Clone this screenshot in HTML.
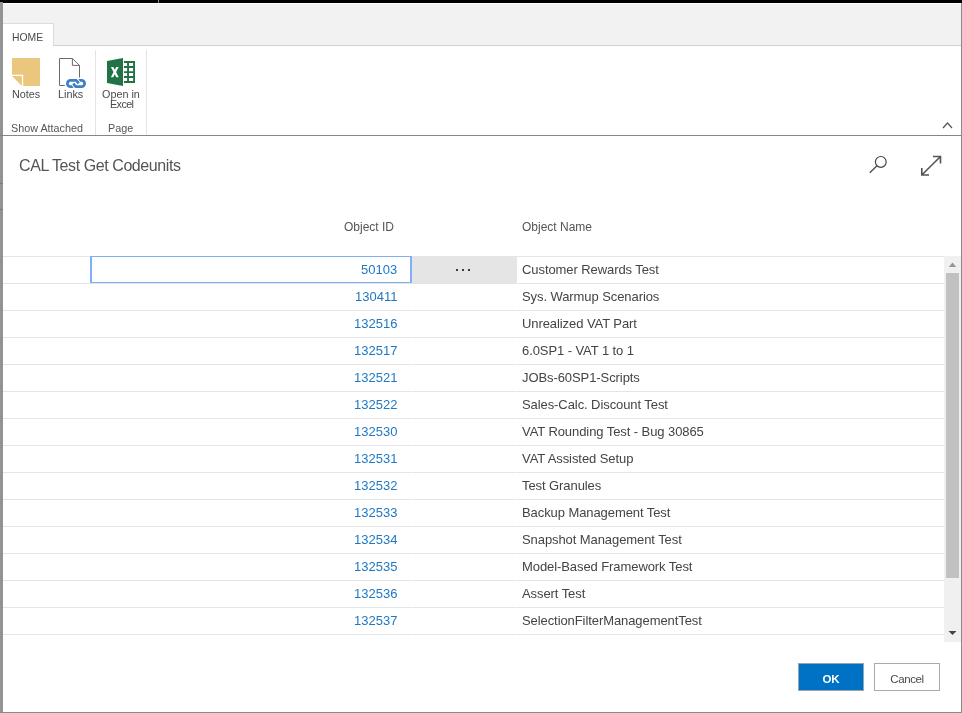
<!DOCTYPE html>
<html><head><meta charset="utf-8">
<style>
*{margin:0;padding:0;box-sizing:border-box}
html,body{width:962px;height:713px;overflow:hidden;background:#fff;font-family:"Liberation Sans",sans-serif;position:relative}
.a{position:absolute}
.t{position:absolute;white-space:nowrap;line-height:1;will-change:transform}
.rb{font-size:10.8px;color:#4a4a4a}
.id{right:565px;font-size:13px;color:#1f78c3;text-align:right}
.nm{left:522px;font-size:13px;color:#444;letter-spacing:-0.08px}
</style></head><body>
<!-- top black bar -->
<div class="a" style="left:0;top:0;width:962px;height:3px;background:#000"></div>
<div class="a" style="left:158px;top:0;width:1px;height:3px;background:#888"></div>
<!-- ribbon tab strip -->
<div class="a" style="left:3px;top:4px;width:958px;height:41px;background:#f2f2f2"></div>
<div class="a" style="left:3px;top:45px;width:958px;height:1px;background:#c9d1da"></div>
<!-- HOME tab -->
<div class="a" style="left:3px;top:23px;width:51px;height:23px;background:#fff;border-top:1px solid #dcdcdc;border-right:1px solid #dcdcdc"></div>
<div class="t" style="left:12px;top:33px;font-size:10.4px;color:#4a4a4a">HOME</div>
<!-- ribbon body bottom line -->
<div class="a" style="left:3px;top:135px;width:958px;height:1px;background:#7f8790"></div>
<!-- separators -->
<div class="a" style="left:95px;top:50px;width:1px;height:85px;background:#e3e3e3"></div>
<div class="a" style="left:146px;top:50px;width:1px;height:85px;background:#e3e3e3"></div>
<!-- ribbon icons -->
<svg class="a" style="left:0;top:0" width="160" height="100" viewBox="0 0 160 100">
  <polygon points="12,58 40,58 40,86 23.2,86 23.2,74.7 12,74.7" fill="#ebc77d"/>
  <polygon points="12,76 21.9,76 21.9,86" fill="#ebc77d"/>
  <path d="M64.8,85.5 H59.5 V58.5 H72.4 L79.5,65.4 V77.5 M72.4,58.5 V65.4 H79.5" fill="none" stroke="#6b6b6b" stroke-width="1"/>
  <path d="M73.5,86.6 H70.5 A3.1,3.1 0 0 1 70.5,80.4 H76.3 L78.7,83.4 M78.6,80.4 H81.5 A3.1,3.1 0 0 1 81.5,86.6 H75.6 L73.3,83.5" fill="none" stroke="#3f7fc4" stroke-width="2.8"/>
  <path d="M77.2,78.6 L80.4,82.6 M71.5,84.2 L74.5,88.3" stroke="#fff" stroke-width="0.9"/>
  <polygon points="107,61 123,58 123,86 107,83" fill="#217346"/>
  <path d="M110.9,66.9 h2.4 l1.5,2.8 l1.5,-2.8 h2.4 l-2.6,5.1 l2.6,5.2 h-2.4 l-1.5,-2.9 l-1.5,2.9 h-2.4 l2.6,-5.2 z" fill="#fff"/>
  <path d="M124,61 H135 V83 H124 V81 H127.1 V78 H124 V76 H127.1 V73 H124 V71.2 H127.1 V68 H124 V66.1 H127.1 V62.9 H124 Z M129,62.9 V66.1 H133.1 V62.9 Z M129,68 V71.2 H133.1 V68 Z M129,73 V76 H133.1 V73 Z M129,78 V81 H133.1 V78 Z" fill="#217346" fill-rule="evenodd"/>
</svg>
<div class="t rb" style="left:12px;top:88.5px">Notes</div>
<div class="t rb" style="left:58px;top:88.5px">Links</div>
<div class="t rb" style="left:102px;top:88.5px">Open in</div>
<div class="t rb" style="left:110px;top:99px;letter-spacing:-0.6px">Excel</div>
<div class="t rb" style="left:10.5px;top:123px;color:#555">Show Attached</div>
<div class="t rb" style="left:107.5px;top:123px;color:#555">Page</div>
<!-- caret -->
<svg class="a" style="left:940px;top:118px" width="16" height="14"><path d="M3,10 L7.5,5 L12,10" fill="none" stroke="#555" stroke-width="1.2"/></svg>

<!-- title -->
<div class="t" style="left:18.5px;top:157.5px;font-size:16px;letter-spacing:-0.42px;color:#555">CAL Test Get Codeunits</div>
<!-- search & expand -->
<svg class="a" style="left:860px;top:145px" width="90" height="40" viewBox="860 145 90 40">
  <circle cx="880.8" cy="161.9" r="5.4" fill="none" stroke="#444" stroke-width="1.2"/>
  <path d="M869.8,172.8 L877,165.7" stroke="#444" stroke-width="1.2"/>
  <path d="M921.8,175 L940.5,156.5 M933,156.5 H940.5 V163.5 M921.8,168 V175 H929" fill="none" stroke="#555" stroke-width="1.6"/>
</svg>

<!-- header -->
<div class="t" style="left:344px;top:221px;font-size:12px;color:#555">Object ID</div>
<div class="t" style="left:522px;top:221px;font-size:12px;color:#555">Object Name</div>
<div class="a" style="left:3px;top:256px;width:941px;height:1px;background:#e5e5e5"></div>

<!-- rows -->
<div class="a" style="left:412px;top:256px;width:105px;height:27px;background:#e5e5e5"></div>
<div class="a" style="left:456px;top:269px;width:2px;height:2px;background:#3a3a3a"></div><div class="a" style="left:462px;top:269px;width:2px;height:2px;background:#3a3a3a"></div><div class="a" style="left:468px;top:269px;width:2px;height:2px;background:#3a3a3a"></div>
<div class="a" style="left:3px;top:283px;width:941px;height:1px;background:#e5e5e5"></div>
<div class="t id" style="top:263px">50103</div>
<div class="t nm" style="top:263px">Customer Rewards Test</div>
<div class="a" style="left:3px;top:310px;width:941px;height:1px;background:#e5e5e5"></div>
<div class="t id" style="top:290px">130411</div>
<div class="t nm" style="top:290px">Sys. Warmup Scenarios</div>
<div class="a" style="left:3px;top:337px;width:941px;height:1px;background:#e5e5e5"></div>
<div class="t id" style="top:317px">132516</div>
<div class="t nm" style="top:317px">Unrealized VAT Part</div>
<div class="a" style="left:3px;top:364px;width:941px;height:1px;background:#e5e5e5"></div>
<div class="t id" style="top:344px">132517</div>
<div class="t nm" style="top:344px">6.0SP1 - VAT 1 to 1</div>
<div class="a" style="left:3px;top:391px;width:941px;height:1px;background:#e5e5e5"></div>
<div class="t id" style="top:371px">132521</div>
<div class="t nm" style="top:371px">JOBs-60SP1-Scripts</div>
<div class="a" style="left:3px;top:418px;width:941px;height:1px;background:#e5e5e5"></div>
<div class="t id" style="top:398px">132522</div>
<div class="t nm" style="top:398px">Sales-Calc. Discount Test</div>
<div class="a" style="left:3px;top:445px;width:941px;height:1px;background:#e5e5e5"></div>
<div class="t id" style="top:425px">132530</div>
<div class="t nm" style="top:425px">VAT Rounding Test - Bug 30865</div>
<div class="a" style="left:3px;top:472px;width:941px;height:1px;background:#e5e5e5"></div>
<div class="t id" style="top:452px">132531</div>
<div class="t nm" style="top:452px">VAT Assisted Setup</div>
<div class="a" style="left:3px;top:499px;width:941px;height:1px;background:#e5e5e5"></div>
<div class="t id" style="top:479px">132532</div>
<div class="t nm" style="top:479px">Test Granules</div>
<div class="a" style="left:3px;top:526px;width:941px;height:1px;background:#e5e5e5"></div>
<div class="t id" style="top:506px">132533</div>
<div class="t nm" style="top:506px">Backup Management Test</div>
<div class="a" style="left:3px;top:553px;width:941px;height:1px;background:#e5e5e5"></div>
<div class="t id" style="top:533px">132534</div>
<div class="t nm" style="top:533px">Snapshot Management Test</div>
<div class="a" style="left:3px;top:580px;width:941px;height:1px;background:#e5e5e5"></div>
<div class="t id" style="top:560px">132535</div>
<div class="t nm" style="top:560px">Model-Based Framework Test</div>
<div class="a" style="left:3px;top:607px;width:941px;height:1px;background:#e5e5e5"></div>
<div class="t id" style="top:587px">132536</div>
<div class="t nm" style="top:587px">Assert Test</div>
<div class="a" style="left:3px;top:634px;width:941px;height:1px;background:#e5e5e5"></div>
<div class="t id" style="top:614px">132537</div>
<div class="t nm" style="top:614px">SelectionFilterManagementTest</div>
<div class="a" style="left:516px;top:283px;width:1px;height:1px;background:#f6f6f6"></div>
<div class="a" style="left:411px;top:310px;width:1px;height:1px;background:#f6f6f6"></div>
<div class="a" style="left:516px;top:310px;width:1px;height:1px;background:#f6f6f6"></div>
<div class="a" style="left:411px;top:337px;width:1px;height:1px;background:#f6f6f6"></div>
<div class="a" style="left:516px;top:337px;width:1px;height:1px;background:#f6f6f6"></div>
<div class="a" style="left:411px;top:364px;width:1px;height:1px;background:#f6f6f6"></div>
<div class="a" style="left:516px;top:364px;width:1px;height:1px;background:#f6f6f6"></div>
<div class="a" style="left:411px;top:391px;width:1px;height:1px;background:#f6f6f6"></div>
<div class="a" style="left:516px;top:391px;width:1px;height:1px;background:#f6f6f6"></div>
<div class="a" style="left:411px;top:418px;width:1px;height:1px;background:#f6f6f6"></div>
<div class="a" style="left:516px;top:418px;width:1px;height:1px;background:#f6f6f6"></div>
<div class="a" style="left:411px;top:445px;width:1px;height:1px;background:#f6f6f6"></div>
<div class="a" style="left:516px;top:445px;width:1px;height:1px;background:#f6f6f6"></div>
<div class="a" style="left:411px;top:472px;width:1px;height:1px;background:#f6f6f6"></div>
<div class="a" style="left:516px;top:472px;width:1px;height:1px;background:#f6f6f6"></div>
<div class="a" style="left:411px;top:499px;width:1px;height:1px;background:#f6f6f6"></div>
<div class="a" style="left:516px;top:499px;width:1px;height:1px;background:#f6f6f6"></div>
<div class="a" style="left:411px;top:526px;width:1px;height:1px;background:#f6f6f6"></div>
<div class="a" style="left:516px;top:526px;width:1px;height:1px;background:#f6f6f6"></div>
<div class="a" style="left:411px;top:553px;width:1px;height:1px;background:#f6f6f6"></div>
<div class="a" style="left:516px;top:553px;width:1px;height:1px;background:#f6f6f6"></div>
<div class="a" style="left:411px;top:580px;width:1px;height:1px;background:#f6f6f6"></div>
<div class="a" style="left:516px;top:580px;width:1px;height:1px;background:#f6f6f6"></div>
<div class="a" style="left:411px;top:607px;width:1px;height:1px;background:#f6f6f6"></div>
<div class="a" style="left:516px;top:607px;width:1px;height:1px;background:#f6f6f6"></div>
<div class="a" style="left:411px;top:634px;width:1px;height:1px;background:#f6f6f6"></div>
<div class="a" style="left:516px;top:634px;width:1px;height:1px;background:#f6f6f6"></div>
<div class="a" style="left:90px;top:256px;width:322px;height:27px;border:1px solid #82aef5;border-left-width:2px;border-right-width:2px"></div>

<!-- scrollbar -->
<div class="a" style="left:944px;top:256px;width:17px;height:386px;background:#f0f0f0"></div>
<div class="a" style="left:946px;top:273px;width:13px;height:305px;background:#c1c1c1"></div>
<svg class="a" style="left:944px;top:256px" width="16" height="386">
  <polygon points="4.8,11 8.5,6.6 12.2,11" fill="#969696"/>
  <polygon points="4.5,375 12.5,375 8.5,379" fill="#444"/>
</svg>

<!-- buttons -->
<div class="a" style="left:798px;top:663px;width:66px;height:28px;background:#0072c6;border:1px solid #9aa4ad"></div>
<div class="t" style="left:798px;top:674px;width:66px;text-align:center;font-size:11.5px;font-weight:bold;color:#fff">OK</div>
<div class="a" style="left:874px;top:663px;width:66px;height:28px;background:#fff;border:1px solid #aaa"></div>
<div class="t" style="left:874px;top:673.5px;width:66px;text-align:center;font-size:11.5px;letter-spacing:-0.4px;color:#4a4a4a">Cancel</div>

<!-- left and right borders -->
<div class="a" style="left:0;top:2px;width:3px;height:711px;background:#939393"></div>
<div class="a" style="left:0;top:135px;width:3px;height:1px;background:#78808a"></div><div class="a" style="left:0;top:183px;width:3px;height:1px;background:#7c7c7c"></div><div class="a" style="left:0;top:209px;width:3px;height:1px;background:#7c7c7c"></div>
<div class="a" style="left:961px;top:3px;width:1px;height:710px;background:#8a8a8a"></div>
<div class="a" style="left:0;top:712px;width:962px;height:1px;background:#8a8a8a"></div>
</body></html>
